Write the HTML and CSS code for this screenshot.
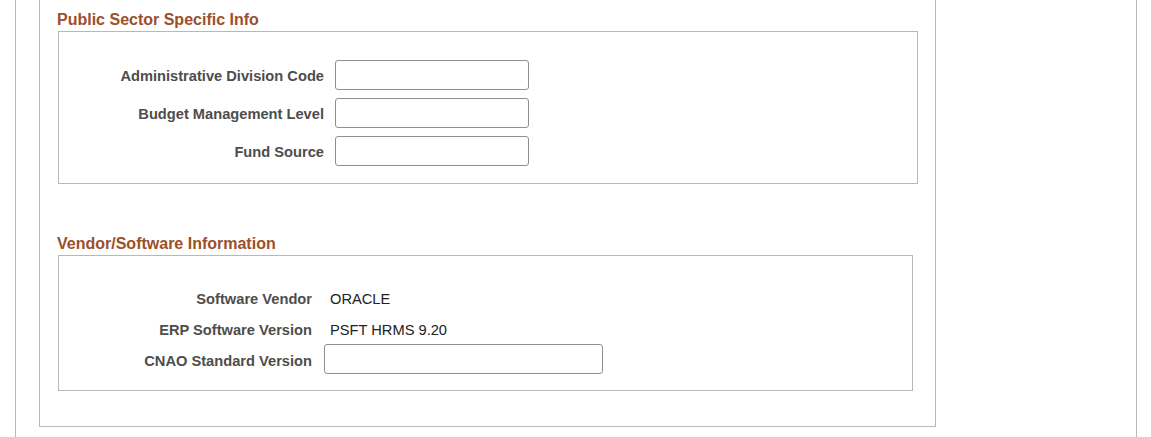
FILE: index.html
```html
<!DOCTYPE html>
<html lang="en">
<head>
  <meta charset="UTF-8">
  <title>Public Sector Specific Info</title>
  <link rel="stylesheet" href="styles.css">
</head>
<body>
  <div class="page">
    <div class="panel">
      <h2 class="group-title">Public Sector Specific Info</h2>
      <div class="group-box sector-box">
        <label class="field-label" for="adm_div">Administrative Division Code</label>
        <input type="text" id="adm_div" class="field-input">
        <label class="field-label" for="budget_lvl">Budget Management Level</label>
        <input type="text" id="budget_lvl" class="field-input">
        <label class="field-label" for="fund_src">Fund Source</label>
        <input type="text" id="fund_src" class="field-input">
      </div>

      <h2 class="group-title vendor-title">Vendor/Software Information</h2>
      <div class="group-box vendor-box">
        <span class="field-label">Software Vendor</span>
        <span class="field-value">ORACLE</span>
        <span class="field-label">ERP Software Version</span>
        <span class="field-value">PSFT HRMS 9.20</span>
        <label class="field-label" for="cnao_ver">CNAO Standard Version</label>
        <input type="text" id="cnao_ver" class="field-input">
      </div>
    </div>
  </div>
</body>
</html>
```

FILE: styles.css
```css
body {
  margin: 0;
  font-family: "Liberation Sans", Arial, sans-serif;
  background: white;
}

.page {
  box-sizing: border-box;
  margin-left: 15px;
  width: 1122px;
  min-height: 437px;
  padding-left: 23px;
  border-left: 1px solid #bbb8b2;
  border-right: 1px solid #bbb8b2;
}

.panel {
  box-sizing: border-box;
  width: 897px;
  padding: 10px 0 35px 0;
  border: 1px solid #bbb8b2;
  border-top: none;
}

.group-title {
  margin: 0 0 1px 17px;
  height: 20px;
  line-height: 20px;
  font-size: 16px;
  font-weight: bold;
  color: #9c4f2a;
}

.vendor-title {
  margin-top: 50px;
}

.group-box {
  box-sizing: border-box;
  margin-left: 18px;
  border: 1px solid #bbb8b2;
  display: grid;
  align-items: center;
}

.sector-box {
  width: 860px;
  padding: 28px 0 17px 0;
  grid-template-columns: 265px 194px;
  grid-auto-rows: 30px;
  column-gap: 11px;
  row-gap: 8px;
}

.vendor-box {
  width: 855px;
  padding: 25px 0 16px 0;
  grid-template-columns: 253px 279px;
  grid-template-rows: 32px 31px 30px;
  column-gap: 12px;
}

.field-label {
  padding-top: 2px;
  text-align: right;
  font-size: 14.67px;
  font-weight: bold;
  color: #4d4d4d;
}

.vendor-box .field-label,
.field-value {
  padding-top: 3px;
}

.field-value {
  padding-left: 6px;
  font-size: 14.67px;
  color: #222;
}

.field-input {
  box-sizing: border-box;
  width: 100%;
  height: 30px;
  margin: 0;
  padding: 0 6px;
  border: 1px solid #8f8f8f;
  border-radius: 3px;
  background: white;
  font-family: inherit;
  font-size: 14.67px;
}
```
